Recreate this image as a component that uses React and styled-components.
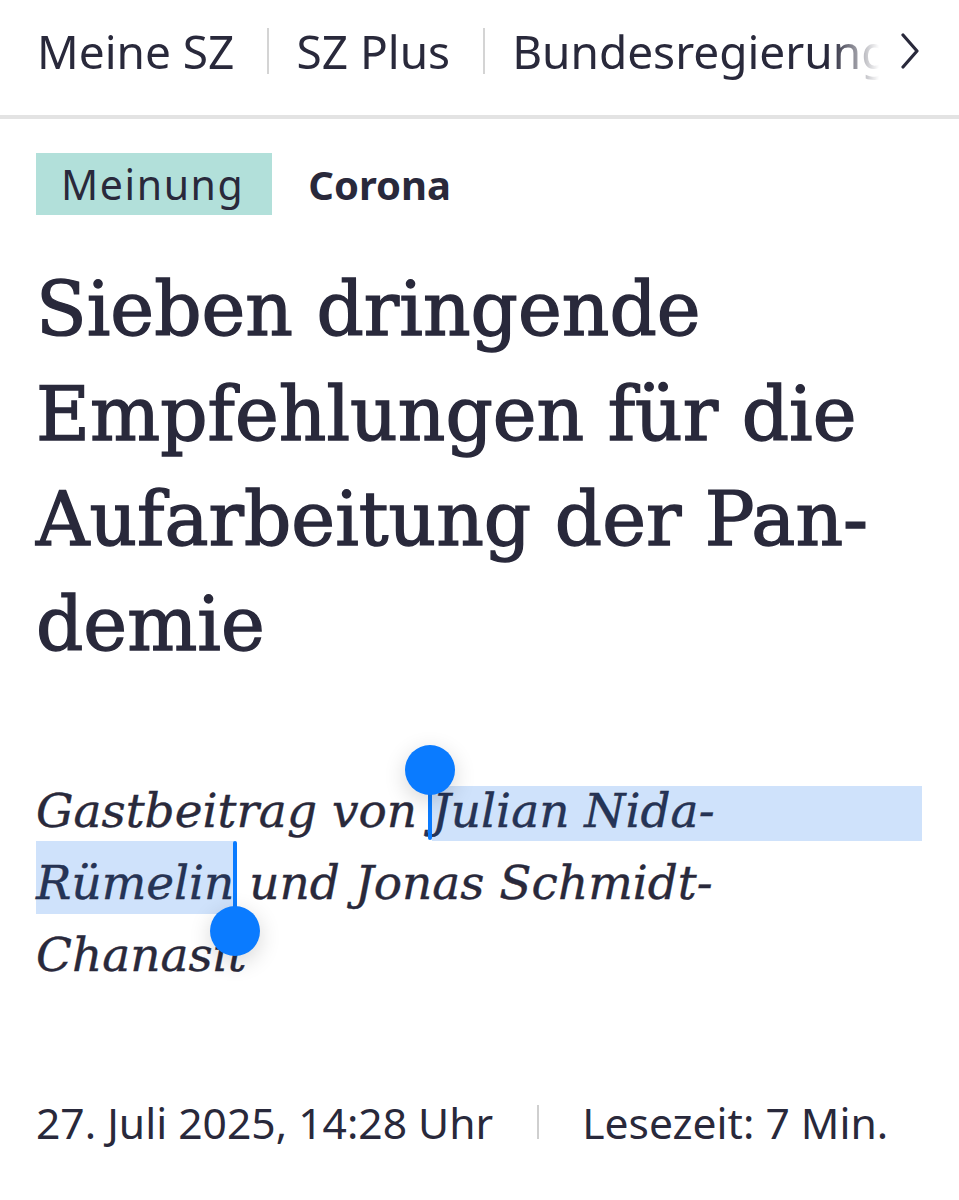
import React from 'react'
import styled, { createGlobalStyle } from 'styled-components'

const GlobalStyle = createGlobalStyle`
  body {
    margin: 0;
    background: #ffffff;
    color: #29293b;
  }
`

const Page = styled.div`
  width: 959px;
  min-height: 1200px;
  background: #fff;
`

const Nav = styled.nav`
  height: 101px;
  display: flex;
  align-items: center;
  padding: 0 40px 14px 37px;
  border-bottom: 4px solid #e3e3e3;
  font-family: 'Noto Sans', sans-serif;
`

const NavScroll = styled.div`
  flex: 1;
  display: flex;
  align-items: center;
  overflow: hidden;
  white-space: nowrap;
  -webkit-mask-image: linear-gradient(to right, #000 calc(100% - 48px), transparent);
  mask-image: linear-gradient(to right, #000 calc(100% - 48px), transparent);
`

const NavItem = styled.span`
  font-size: 46px;
  color: #29293b;
`

const NavDivider = styled.span`
  width: 2px;
  height: 46px;
  background: #d4d4d4;
  margin: 0 27px 0 33px;
  flex-shrink: 0;
`

const Chevron = styled.svg`
  flex-shrink: 0;
  margin-left: 22px;
`

const Main = styled.main`
  padding: 34px 37px 0 36px;
`

const TagRow = styled.div`
  display: flex;
  align-items: center;
  gap: 36px;
  font-family: 'Noto Sans', sans-serif;
`

const Tag = styled.span`
  background: #b2e0da;
  height: 62px;
  padding: 0 28px 0 25px;
  display: flex;
  align-items: center;
  font-size: 41px;
  letter-spacing: 1.6px;
  color: #29293b;
`

const Topic = styled.span`
  font-size: 40px;
  font-weight: 700;
  color: #29293b;
`

const Headline = styled.h1`
  margin: 42px 0 0;
  font-family: 'DejaVu Serif', serif;
  font-weight: 400;
  font-size: 74px;
  line-height: 105px;
  white-space: nowrap;
  color: #29293b;
  -webkit-text-stroke: 1.4px #29293b;
`

const Byline = styled.div`
  margin-top: 98px;
  font-family: 'DejaVu Serif', serif;
  font-style: italic;
  font-size: 47px;
  color: #29293b;
  -webkit-text-stroke: 0.4px #29293b;
  isolation: isolate;
`

const BylineRow = styled.div`
  display: flex;
  height: 72px;
  line-height: 72px;
  white-space: pre;
`

const Selected = styled.span`
  position: relative;
  color: #243458;
  flex: ${p => (p.$fill ? 1 : '0 0 auto')};

  &::before {
    content: '';
    position: absolute;
    left: 0;
    right: 0;
    top: ${p => p.$top}px;
    bottom: ${p => p.$bottom}px;
    background: #cfe2fb;
    z-index: -1;
  }
`

const Handle = styled.span`
  position: absolute;
  width: 4px;
  background: #0a7bff;
  border-radius: 2px;
  left: ${p => (p.$end ? 'calc(100% - 1px)' : '-4px')};
  top: ${p => (p.$end ? -6 : -5)}px;
  height: ${p => (p.$end ? 90 : 70)}px;
  z-index: 2;
  -webkit-text-stroke: 0;

  &::before {
    content: '';
    position: absolute;
    left: -23px;
    ${p => (p.$end ? 'bottom: -25px;' : 'top: -25px;')}
    width: 50px;
    height: 50px;
    border-radius: 50%;
    background: #0a7bff;
    box-shadow: 0 6px 22px rgba(0, 0, 0, 0.16);
  }
`

const Meta = styled.div`
  margin-top: 106px;
  display: flex;
  align-items: center;
  font-family: 'Noto Sans', sans-serif;
  font-size: 42.6px;
  line-height: 50px;
  color: #29293b;
`

const MetaDivider = styled.span`
  width: 2px;
  height: 34px;
  background: #cfcfcf;
  margin: 0 43px 0 44px;
`

const App = () => {
  return (
    <Page>
      <GlobalStyle />
      <Nav>
        <NavScroll>
          <NavItem>Meine SZ</NavItem>
          <NavDivider />
          <NavItem>SZ Plus</NavItem>
          <NavDivider />
          <NavItem>Bundesregierung</NavItem>
        </NavScroll>
        <Chevron width="18" height="36" viewBox="0 0 18 36">
          <polyline points="2,2 16,18 2,34" fill="none" stroke="#29293b" strokeWidth="3.2" strokeLinecap="round" strokeLinejoin="round" />
        </Chevron>
      </Nav>
      <Main>
        <TagRow>
          <Tag>Meinung</Tag>
          <Topic>Corona</Topic>
        </TagRow>
        <Headline>
          Sieben dringende<br />
          Empfehlungen für die<br />
          Aufarbeitung der Pan-<br />
          demie
        </Headline>
        <Byline>
          <BylineRow>
            Gastbeitrag von <Selected $fill $top={11} $bottom={6}>
              <Handle />
              Julian Nida-
            </Selected>
          </BylineRow>
          <BylineRow>
            <Selected $top={-6} $bottom={5}>
              Rümelin
              <Handle $end />
            </Selected> und Jonas Schmidt-
          </BylineRow>
          <BylineRow>Chanasit</BylineRow>
        </Byline>
        <Meta>
          <span>27. Juli 2025, 14:28 Uhr</span>
          <MetaDivider />
          <span>Lesezeit: 7 Min.</span>
        </Meta>
      </Main>
    </Page>
  )
}

export default App
